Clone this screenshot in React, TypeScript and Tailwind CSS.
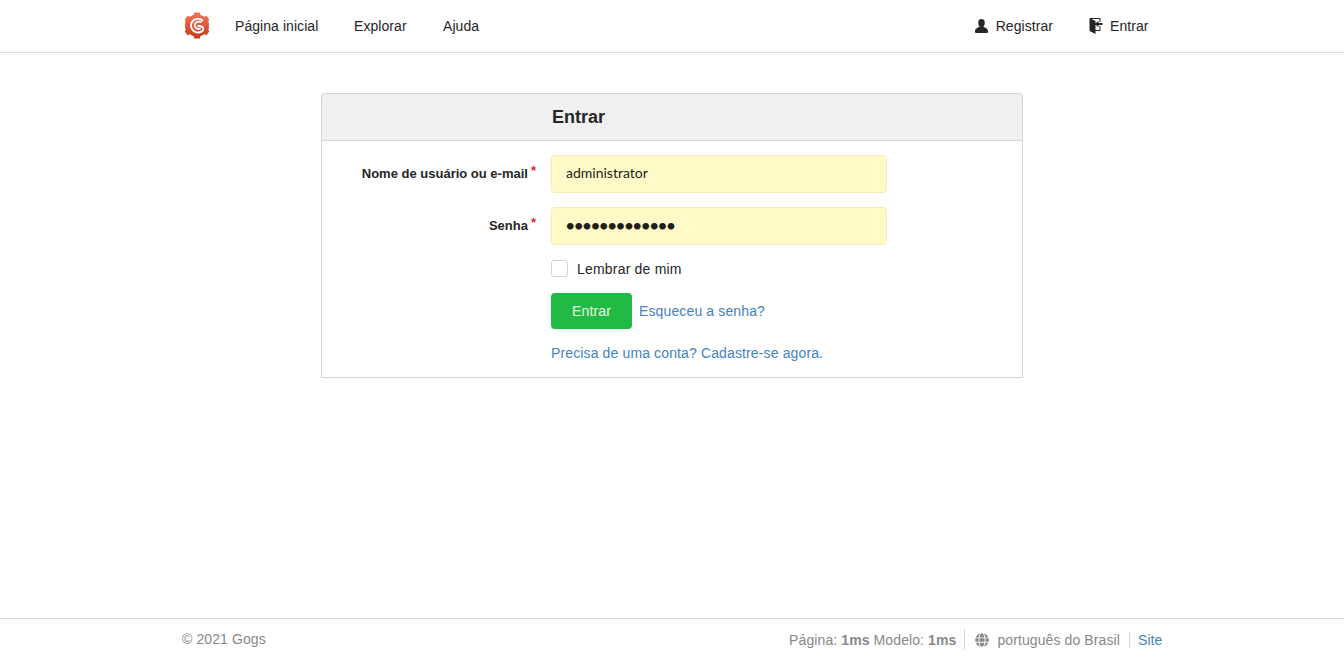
import React from "react";
import { FaGlobe } from "react-icons/fa";

function Logo() {
  return (
    <svg className="-mt-px h-[27px] w-[26px]" viewBox="0 0 26 27">
      <defs>
        <linearGradient id="logo" x1="0" y1="0" x2="0" y2="1">
          <stop offset="0" stopColor="#f4735a" />
          <stop offset="1" stopColor="#c23b1c" />
        </linearGradient>
      </defs>
      <path
        fill="url(#logo)"
        d="M10 .5h6v2l4.500 2.200 2-.9 2.700 3.800-.9 2 .6 1.400v5l-.6 1.400.9 2-2.700 3.800-2-.9-4.500 2.200v2h-6v-2l-4.500-2.200-2 .9L.8 19.400l.9-2-.6-1.400v-5l.6-1.400-.9-2 2.700-3.800 2 .9L10 2.500z"
      />
      <path
        d="M19 8.800A7 6.900 0 1 0 17.500 19.600C20 18.300 20 15.300 17.500 14.500L13.500 13.700M17.500 10.300C14 8.600 10.300 10.600 10.700 13.900C11.200 16.700 14.200 17.700 16.600 16.500"
        fill="none"
        stroke="#fff"
        strokeWidth="1.900"
      />
    </svg>
  );
}

function PersonIcon() {
  return (
    <svg className="-mt-px h-[14px] w-[13px]" viewBox="0 1 12 14" preserveAspectRatio="none" fill="currentColor">
      <path d="M12 14.002a.998.998 0 0 1-.998.998H1.001A1 1 0 0 1 0 13.999V13c0-2.633 4-4 4-4s.229-.409 0-1c-.841-.62-.944-1.590-1-4 .173-2.413 1.867-3 3-3s2.827.586 3 3c-.056 2.410-.159 3.380-1 4-.229.590 0 1 0 1s4 1.367 4 4v1.002z" />
    </svg>
  );
}

function SignInIcon() {
  return (
    <svg className="-mt-px h-4 w-3.5" viewBox="0.500 0 14 16" fill="currentColor">
      <path d="M7 6.750V12h4V8h1v4c0 .55-.45 1-1 1H7v3l-5.450-2.720c-.33-.17-.55-.52-.55-.91V1c0-.55.45-1 1-1h9c.55 0 1 .45 1 1v3h-1V1H3l4 2v2.250L10 3v2h4v2h-4v2L7 6.750z" />
    </svg>
  );
}

function Field({ label, type, value }: { label: string; type: string; value: string }) {
  const typeClass =
    type === "password" ? "pl-[13px] pb-[2px] text-[18px] tracking-[-2.05px]" : "pl-[14px] pb-[4px] text-[14px]";
  return (
    <div className="flex h-[38px]">
      <label className="w-[214px] pt-[9px] text-right text-[13px] leading-[19px] font-bold">
        {label}
        <span className="relative -top-[3px] ml-[3px] text-[#db2828]">*</span>
      </label>
      <input
        type={type}
        defaultValue={value}
        className={`ml-[15px] h-[38px] w-[336px] rounded-[4px] border border-[#fce9b5] bg-[#fffac8] pr-[14px] font-['Lato',sans-serif] text-[#221e17] outline-none ${typeClass}`}
      />
    </div>
  );
}

export default function App() {
  return (
    <div className="flex h-[672px] flex-col bg-white font-['Liberation_Sans',Arial,sans-serif] text-[14px] leading-5 text-[#262626]">
      <header className="flex h-[53px] shrink-0 items-center border-b border-[#dcdcdc] pr-[195.5px] pl-[184px] tracking-[0.06px] shadow-[0_2px_3px_rgba(0,0,0,0.04)]">
        <Logo />
        <nav className="flex flex-1 items-center">
          <a className="ml-[25px] w-[119px]">Página inicial</a>
          <a className="w-[89px]">Explorar</a>
          <a>Ajuda</a>
        </nav>
        <a className="flex items-center gap-[8px]">
          <PersonIcon />
          Registrar
        </a>
        <a className="ml-[36px] flex items-center gap-[7px]">
          <SignInIcon />
          Entrar
        </a>
      </header>
      <main className="flex-1 pt-10">
        <form className="mx-auto h-[285px] w-[702px]">
          <h3 className="h-12 rounded-t-[4px] border border-[#d4d4d5] bg-[#f0f0f0] pt-[13px] pl-[230px] text-[18px] leading-5 font-bold">
            Entrar
          </h3>
          <div className="flex h-[237px] flex-col border border-t-0 border-[#d4d4d5] pt-[14px]">
            <Field label="Nome de usuário ou e-mail" type="text" value="administrator" />
            <div className="h-[14px]" />
            <Field label="Senha" type="password" value="administrator" />
            <div className="mt-[14px] ml-[229px] flex h-5 items-center gap-[9px] tracking-[0.2px]">
              <span className="mb-px h-[17px] w-[17px] rounded-[3px] border border-[#d4d4d5]" />
              <span>Lembrar de mim</span>
            </div>
            <div className="mt-[14px] ml-[229px] flex h-9 items-center gap-[7px] tracking-[0.13px]">
              <button type="button" className="h-9 w-[81px] rounded-[4px] bg-[#21ba45] text-[#eef8e0]">
                Entrar
              </button>
              <a className="text-[#4183c4]">Esqueceu a senha?</a>
            </div>
            <a className="mt-[14px] ml-[229px] tracking-[0.13px] text-[#4183c4]">
              Precisa de uma conta? Cadastre-se agora.
            </a>
          </div>
        </form>
      </main>
      <footer className="flex h-[54px] shrink-0 justify-between border-t border-[#d6d6d6] pt-[10px] pr-[181.5px] pl-[182px] tracking-[0.1px] text-[#888]">
        <span>© 2021 Gogs</span>
        <div className="flex h-[21px] items-center">
          <span className="pr-2">
            Página: <b>1ms</b> Modelo: <b>1ms</b>
          </span>
          <span className="flex h-[21px] items-center border-l border-[#d6d6d6] pl-[10px]">
            <FaGlobe className="h-[14px] w-[14px]" />
            <span className="ml-2">português do Brasil</span>
          </span>
          <a className="ml-[9px] flex h-4 items-center border-l border-[#d6d6d6] pl-2 text-[#4183c4]">Site</a>
        </div>
      </footer>
    </div>
  );
}
